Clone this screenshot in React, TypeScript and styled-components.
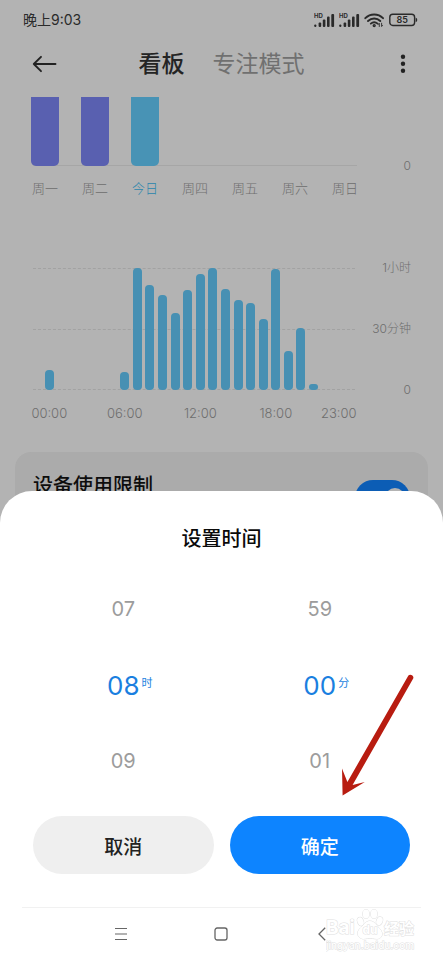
import React, { useState } from "react";
import styled, { createGlobalStyle } from "styled-components";

const GlobalStyle = createGlobalStyle`
  * { box-sizing: border-box; }
  body {
    margin: 0;
    background: #b3b3b3;
    font-family: Inter, "Noto Sans CJK SC", sans-serif;
    color: #1c1c1c;
  }
  button { font: inherit; border: 0; padding: 0; background: none; cursor: pointer; }
`;

const Screen = styled.div`
  height: 100vh;
  overflow: hidden;
  background: #b3b3b3;
`;

const StatusBar = styled.div`
  display: flex;
  align-items: center;
  justify-content: space-between;
  height: 40px;
  padding: 0 25px 0 23px;
  font-size: 14px;
  line-height: 20px;
  color: #2a2a2a;
`;

const StatusIcons = styled.div`
  display: flex;
  align-items: center;
  gap: 4px;
`;

const Header = styled.header`
  display: flex;
  align-items: center;
  justify-content: space-between;
  height: 48px;
  padding: 0 32px;
`;

const IconButton = styled.button`
  display: flex;
  color: #222;
`;

const Tabs = styled.nav`
  display: flex;
  gap: 28px;
`;

const Tab = styled.button<{ $active?: boolean }>`
  font-size: 23px;
  line-height: 32px;
  font-weight: ${(p) => (p.$active ? 500 : 400)};
  color: ${(p) => (p.$active ? "#242424" : "#707070")};
`;

const Content = styled.main`
  padding-top: 9px;
`;

const Chart = styled.section<{ $left: number; $axis: number }>`
  display: grid;
  grid-template-columns: minmax(0, 1fr) ${(p) => p.$axis}px;
  padding: 0 32px 0 ${(p) => p.$left}px;
  font-size: 12px;
  line-height: 18px;
  font-weight: 300;
  color: #6e6e6e;
`;

const Plot = styled.div<{ $top: number }>`
  display: grid;
  margin: ${(p) => p.$top}px 0 9px;
  & > * { grid-area: 1 / 1; }
`;

const Lines = styled.div<{ $inset: number }>`
  display: flex;
  flex-direction: column;
  justify-content: space-between;
  margin: 0 ${(p) => p.$inset}px;
`;

const Line = styled.div`
  border-top: 1px dashed #a2a2a2;
  &:only-child { margin-top: auto; border-top: 1px solid #a6a6a6; }
`;

const Bars = styled.div<{ $count: number; $height: number }>`
  display: grid;
  grid-template-columns: repeat(${(p) => p.$count}, minmax(0, 1fr));
  align-items: end;
  justify-items: center;
  height: ${(p) => p.$height}px;
`;

const WeekBar = styled.div<{ $today?: boolean }>`
  width: 28px;
  height: 69px;
  border-radius: 0 0 5px 5px;
  background: ${(p) => (p.$today ? "#4893b5" : "#5960b0")};
`;

const HourBars = styled(Bars)`
  margin: 0 10px;
`;

const HourBar = styled.div`
  width: 9px;
  border-radius: 4px;
  background: #4790b3;
`;

const Axis = styled.div`
  display: flex;
  flex-direction: column;
  justify-content: space-between;
  text-align: right;
  &:has(> :only-child) { justify-content: flex-end; }
`;

const Days = styled.div`
  display: grid;
  grid-template-columns: repeat(7, minmax(0, 1fr));
  justify-items: center;
  margin-top: 4px;
`;

const Day = styled.span<{ $today?: boolean }>`
  font-size: 13px;
  color: ${(p) => (p.$today ? "#2a85ad" : "inherit")};
`;

const Hours = styled.div`
  display: grid;
  grid-template-columns: repeat(24, minmax(0, 1fr));
  justify-items: center;
  margin: 5px 10px 0;
  font-size: 13px;
`;

const Hour = styled.span<{ $column: number }>`
  grid-column: ${(p) => p.$column};
  grid-row: 1;
`;

const Gap = styled.div`
  height: 62px;
`;

const LimitCard = styled.label`
  display: flex;
  justify-content: space-between;
  align-items: center;
  min-height: 92px;
  margin: 30px 15px 0;
  padding: 20px 18px;
  border-radius: 16px;
  background: #ababab;
`;

const LimitTitle = styled.span`
  align-self: flex-start;
  font-size: 20px;
  line-height: 28px;
  font-weight: 500;
  color: #0d0d0d;
`;

const Switch = styled.input`
  appearance: none;
  display: grid;
  align-items: center;
  width: 55px;
  height: 36px;
  margin: 0;
  padding: 0 5px;
  border-radius: 18px;
  background: #777;
  &:checked { background: #0c5db5; justify-items: end; }
  &::before {
    content: "";
    width: 20px;
    height: 20px;
    border-radius: 50%;
    background: #b3b3b3;
  }
`;

const Sheet = styled.section`
  position: fixed;
  left: 0;
  right: 0;
  bottom: 0;
  padding-top: 34px;
  border-radius: 32px 32px 0 0;
  background: #fff;
`;

const SheetTitle = styled.h2`
  margin: 0 0 18px;
  font-size: 20px;
  line-height: 28px;
  font-weight: 500;
  text-align: center;
  color: #0a0a0a;
`;

const Columns = styled.div`
  display: grid;
  grid-template-columns: 1fr 1fr;
  gap: 16px;
  padding: 0 33px;
`;

const Wheel = styled.div`
  display: grid;
  grid-auto-rows: 76px;
`;

const WheelRow = styled.button<{ $selected?: boolean }>`
  display: grid;
  grid-template-columns: 1fr auto 1fr;
  align-items: center;
  font-size: ${(p) => (p.$selected ? 26 : 20)}px;
  color: ${(p) => (p.$selected ? "#1a7fe0" : "#9c9c9c")};
`;

const WheelValue = styled.span`
  grid-column: 2;
`;

const Unit = styled.span`
  justify-self: start;
  padding: 0 0 4px 2px;
  font-size: 11px;
  line-height: 16px;
`;

const Actions = styled(Columns)`
  margin-top: 17px;
`;

const ActionButton = styled.button<{ $primary?: boolean }>`
  height: 58px;
  border-radius: 29px;
  font-size: 19px;
  font-weight: 500;
  background: ${(p) => (p.$primary ? "#0d84ff" : "#efefef")};
  color: ${(p) => (p.$primary ? "#fff" : "#222")};
`;

const NavBar = styled.nav`
  display: grid;
  grid-template-columns: repeat(3, 1fr);
  align-items: center;
  justify-items: center;
  height: 53px;
  margin: 33px 22px 0;
  padding: 0 49px;
  border-top: 1px solid #f1f1f1;
`;

const NavButton = styled.button`
  display: flex;
  color: #666;
`;

const Pointer = styled.svg`
  position: absolute;
  right: 29px;
  bottom: 162px;
  pointer-events: none;
`;

const Watermark = styled.svg`
  position: absolute;
  right: 25px;
  bottom: 7px;
  pointer-events: none;
  font-family: Inter, "Noto Sans CJK SC", sans-serif;
`;

function Signal() {
  return (
    <svg width="21" height="16" viewBox="0 0 21 16" fill="#2a2a2a" aria-hidden="true">
      <text x="0" y="6" fontSize="6" fontWeight="700">HD</text>
      <rect x="0.3" y="12.5" width="2" height="2.5" rx="0.8" />
      <rect x="4.6" y="10.4" width="2.6" height="4.6" rx="1" />
      <rect x="8.8" y="7.4" width="2.6" height="7.6" rx="1" />
      <rect x="13" y="4.6" width="2.6" height="10.4" rx="1" />
      <rect x="17.3" y="2" width="2.8" height="13" rx="1" />
    </svg>
  );
}

function Wifi() {
  return (
    <svg width="21" height="16" viewBox="0 0 21 16" fill="none" stroke="#2a2a2a" strokeWidth="1.9" strokeLinecap="round" aria-hidden="true">
      <path d="M1.3 6.2C6.2 1.2 14.2 1.2 19 6.2" />
      <path d="M4 9C7.6 5.6 12.8 5.6 16.3 9" />
      <path d="M6.8 11.6C8.8 9.9 11.6 9.9 13.6 11.6" />
      <circle cx="10.2" cy="13.6" r="0.7" />
      <path d="M15.3 14.5V11.3L14.4 12.4M17.6 11.2V14.5L18.5 13.4" strokeWidth="0.9" />
    </svg>
  );
}

function Battery() {
  return (
    <svg width="29" height="14" viewBox="0 0 29 14" aria-hidden="true">
      <rect x="0.8" y="1.3" width="24.8" height="11.2" rx="3" fill="none" stroke="#2a2a2a" strokeWidth="1.4" />
      <path d="M26.7 4.7C28.7 4.7 28.7 9 26.7 9Z" fill="#2a2a2a" />
      <text x="13.2" y="10" textAnchor="middle" fontSize="9" fontWeight="600" fill="#2a2a2a">85</text>
    </svg>
  );
}

const days = ["周一", "周二", "今日", "周四", "周五", "周六", "周日"];
const usage = [20, 0, 0, 0, 0, 0, 18, 122, 105, 95, 77, 100, 116, 122, 101, 90, 87, 71, 121, 39, 62, 6, 0, 0];
const hourMarks: [number, string][] = [[1, "00:00"], [7, "06:00"], [13, "12:00"], [19, "18:00"], [24, "23:00"]];

const pad = (n: number) => String(n).padStart(2, "0");

interface PickerProps {
  label: string;
  unit: string;
  value: number;
  size: number;
  onChange: (n: number) => void;
}

function Picker({ label, unit, value, size, onChange }: PickerProps) {
  const previous = (value + size - 1) % size;
  const next = (value + 1) % size;
  return (
    <Wheel role="group" aria-label={label}>
      <WheelRow type="button" onClick={() => onChange(previous)}>
        <WheelValue>{pad(previous)}</WheelValue>
      </WheelRow>
      <WheelRow type="button" $selected aria-pressed="true">
        <WheelValue>{pad(value)}</WheelValue>
        <Unit>{unit}</Unit>
      </WheelRow>
      <WheelRow type="button" onClick={() => onChange(next)}>
        <WheelValue>{pad(next)}</WheelValue>
      </WheelRow>
    </Wheel>
  );
}

export default function App() {
  const [hour, setHour] = useState(8);
  const [minute, setMinute] = useState(0);

  return (
    <Screen>
      <GlobalStyle />
      <StatusBar>
        <span>晚上9:03</span>
        <StatusIcons>
          <Signal />
          <Signal />
          <Wifi />
          <Battery />
        </StatusIcons>
      </StatusBar>

      <Header>
        <IconButton type="button" aria-label="返回">
          <svg width="25" height="18" viewBox="0 0 25 18" fill="none" stroke="currentColor" strokeWidth="1.9" strokeLinecap="round" strokeLinejoin="round">
            <path d="M23.5 9H1.8M9 1.8L1.8 9L9 16.2" />
          </svg>
        </IconButton>
        <Tabs>
          <Tab type="button" $active>看板</Tab>
          <Tab type="button">专注模式</Tab>
        </Tabs>
        <IconButton type="button" aria-label="更多">
          <svg width="25" height="20" viewBox="0 0 25 20" fill="currentColor">
            <circle cx="17" cy="2.8" r="2.2" />
            <circle cx="17" cy="9.8" r="2.2" />
            <circle cx="17" cy="16.8" r="2.2" />
          </svg>
        </IconButton>
      </Header>

      <Content>
        <Chart $left={20} $axis={41}>
          <Plot $top={0}>
            <Lines $inset={13}><Line /></Lines>
            <Bars $count={7} $height={69}>
              <WeekBar />
              <WeekBar />
              <WeekBar $today />
            </Bars>
          </Plot>
          <Axis><span>0</span></Axis>
          <Days>
            {days.map((day) => (
              <Day key={day} $today={day === "今日"}>{day}</Day>
            ))}
          </Days>
        </Chart>

        <Gap />

        <Chart $left={33} $axis={56}>
          <Plot $top={9}>
            <Lines $inset={0}><Line /><Line /><Line /></Lines>
            <HourBars $count={24} $height={122}>
              {usage.map((height, i) => (
                <HourBar key={i} style={{ height }} />
              ))}
            </HourBars>
          </Plot>
          <Axis>
            <span>1小时</span>
            <span>30分钟</span>
            <span>0</span>
          </Axis>
          <Hours>
            {hourMarks.map(([column, text]) => (
              <Hour key={text} $column={column}>{text}</Hour>
            ))}
          </Hours>
        </Chart>

        <LimitCard>
          <LimitTitle>设备使用限制</LimitTitle>
          <Switch type="checkbox" role="switch" defaultChecked />
        </LimitCard>
      </Content>

      <Sheet role="dialog" aria-labelledby="sheet-title">
        <SheetTitle id="sheet-title">设置时间</SheetTitle>
        <Columns>
          <Picker label="小时" unit="时" value={hour} size={24} onChange={setHour} />
          <Picker label="分钟" unit="分" value={minute} size={60} onChange={setMinute} />
        </Columns>
        <Actions>
          <ActionButton type="button">取消</ActionButton>
          <ActionButton type="button" $primary>确定</ActionButton>
        </Actions>
        <NavBar>
          <NavButton type="button" aria-label="菜单">
            <svg width="14" height="14" viewBox="0 0 14 14" stroke="currentColor" strokeWidth="1.2">
              <path d="M1 1.5H13M1 7H13M1 12.5H13" />
            </svg>
          </NavButton>
          <NavButton type="button" aria-label="主屏幕">
            <svg width="14" height="14" viewBox="0 0 14 14" fill="none" stroke="currentColor" strokeWidth="1.3">
              <rect x="1" y="1" width="12" height="12" rx="2.2" />
            </svg>
          </NavButton>
          <NavButton type="button" aria-label="返回上一页">
            <svg width="8" height="14" viewBox="0 0 8 14" fill="none" stroke="currentColor" strokeWidth="1.3">
              <path d="M7.2 0.8L1 7L7.2 13.2" />
            </svg>
          </NavButton>
        </NavBar>

        <Pointer width="74" height="124" viewBox="0 0 74 124" fill="#b81c10" aria-hidden="true">
          <path d="M68.4 1.6C70.2-0.4 74.4 1.8 73.2 4.6L12.6 111L24.8 108L2.6 121.4L2 94.4L7.4 108Z" />
        </Pointer>

        <Watermark width="92" height="46" viewBox="0 0 92 46" fill="#fff" stroke="#e0e0e0" strokeWidth="1" paintOrder="stroke" aria-hidden="true">
          <text x="0" y="27" fontSize="19" fontWeight="700">Bai</text>
          <ellipse cx="34.5" cy="14.5" rx="3" ry="4.2" transform="rotate(-20 34.5 14.5)" />
          <ellipse cx="40" cy="7" rx="3.2" ry="4.4" />
          <ellipse cx="48" cy="7" rx="3.2" ry="4.4" />
          <ellipse cx="53.5" cy="14" rx="3" ry="4.2" transform="rotate(20 53.5 14)" />
          <path d="M43.8 14C39.5 14 38 18 34.5 21C28.5 26 33 33 39 31.8C42 31.2 46 31.2 49 31.8C56 33 58.5 26.5 53.5 21.5C50 18 48.5 14 43.8 14Z" />
          <text x="36.5" y="27" fontSize="12" fontWeight="700">du</text>
          <text x="58" y="27" fontSize="15" fontWeight="700">经验</text>
          <text x="0" y="42" fontSize="10" fontWeight="500">jingyan.baidu.com</text>
        </Watermark>
      </Sheet>
    </Screen>
  );
}
